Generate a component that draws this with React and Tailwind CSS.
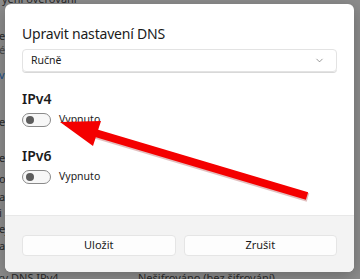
import { ChevronDown } from "lucide-react";

const font = { fontFamily: '"Noto Sans", "Open Sans", sans-serif' };

function Toggle() {
  return (
    <div className="w-[29px] h-[14px] rounded-full border border-[#8a8a8a] bg-[#f7f7f7] flex items-center pl-[3px]">
      <div className="w-[8px] h-[8px] rounded-full bg-[#5c5c5c]" />
    </div>
  );
}

function Section({ title }) {
  return (
    <div className="flex flex-col">
      <h2 className="text-[14px] font-semibold text-[#1b1b1b] leading-[20px]">{title}</h2>
      <div className="flex items-center gap-[8px] mt-[3px] h-[16px]">
        <Toggle />
        <span className="text-[10.5px] text-[#1b1b1b]">Vypnuto</span>
      </div>
    </div>
  );
}

const sideLetters = [
  { t: "e", c: "top-[29px]" },
  { t: "é", c: "top-[43px] text-[#4a4a4a]" },
  { t: "v", c: "top-[68px] text-[#1d4f8a]" },
  { t: "e", c: "top-[115px]" },
  { t: "e", c: "top-[151px]" },
  { t: "o", c: "top-[172px]" },
  { t: "a", c: "top-[190px]" },
  { t: "i", c: "top-[206px]" },
  { t: "ej", c: "top-[222px]" },
  { t: "a", c: "top-[239px]" },
];

export default function App() {
  return (
    <div style={font} className="relative w-[360px] h-[279px] overflow-hidden bg-[#8c8c8c]">
      {/* dimmed settings page behind the dialog */}
      <div className="absolute inset-0 text-[11px] leading-[14px] text-[#2a2a2a]">
        <div className="absolute left-[2px] top-[-8px]">yeni ověřování</div>
        {sideLetters.map((l, i) => (
          <div key={i} className={"absolute left-[-1px] " + l.c}>{l.t}</div>
        ))}
        <div className="absolute left-[-2px] top-[271px]">ry DNS IPv4</div>
        <div className="absolute left-[138px] top-[271px]">Nešifrováno (bez šifrování)</div>
      </div>

      {/* dialog */}
      <div className="absolute left-[5px] top-[4px] w-[349px] h-[268px] rounded-[6px] bg-white shadow-[0_4px_16px_rgba(0,0,0,0.25)] overflow-hidden flex flex-col">
        <div className="flex-1 px-[17px] pt-[20px]">
          <h1 className="text-[14px] tracking-[-0.2px] text-[#1b1b1b] leading-[19px]">Upravit nastavení DNS</h1>
          <div className="mt-[6px] h-[23px] rounded-[4px] border border-[#e3e3e3] shadow-[0_1px_0_#d8d8d8] flex items-center justify-between px-[8px]">
            <span className="text-[10.5px] text-[#1b1b1b]">Ručně</span>
            <ChevronDown size={11} strokeWidth={1.5} className="text-[#6a6a6a] mr-[3px]" />
          </div>
          <div className="mt-[17px] flex flex-col gap-[18px]">
            <Section title="IPv4" />
            <Section title="IPv6" />
          </div>
        </div>
        <div className="h-[57px] bg-[#f3f3f3] border-t border-[#e8e8e8] flex items-start gap-[8px] px-[17px] pt-[19px]">
          <button className="flex-1 h-[21px] rounded-[4px] bg-[#fdfdfd] border border-[#e5e5e5] text-[11px] text-[#1b1b1b]">Uložit</button>
          <button className="flex-1 h-[21px] rounded-[4px] bg-[#fdfdfd] border border-[#e5e5e5] text-[11px] text-[#1b1b1b]">Zrušit</button>
        </div>
      </div>

      {/* red arrow annotation */}
      <svg className="absolute inset-0" width="360" height="279" viewBox="0 0 360 279">
        <line x1="307" y1="196" x2="92" y2="132" stroke="#8a0000" strokeOpacity="0.25" strokeWidth="9" transform="translate(1,1.5)" />
        <line x1="307" y1="196" x2="92" y2="132" stroke="#f40000" strokeWidth="8" strokeLinecap="butt" />
        <polygon points="60,122 101,121 93,146" fill="#f40000" />
      </svg>
    </div>
  );
}
